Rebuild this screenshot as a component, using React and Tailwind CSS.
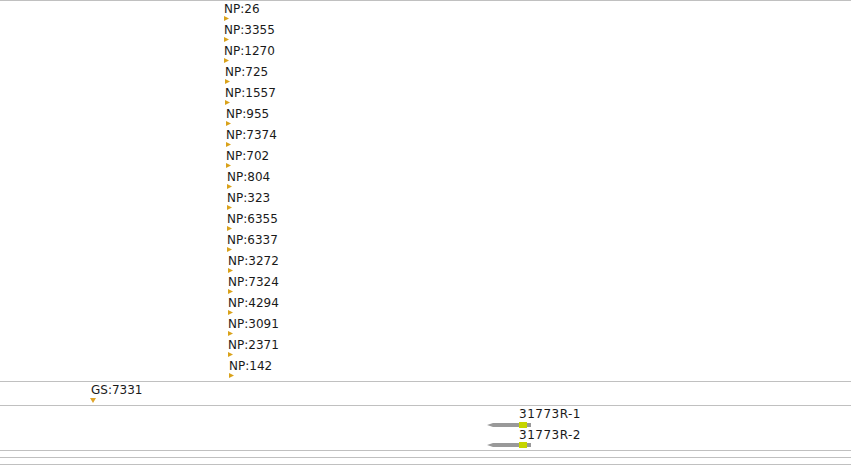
import React from 'react';

const npRows = [
  ['NP:26', 'ml-[224px]'],
  ['NP:3355', 'ml-[224px]'],
  ['NP:1270', 'ml-[224px]'],
  ['NP:725', 'ml-[225px]'],
  ['NP:1557', 'ml-[225px]'],
  ['NP:955', 'ml-[226px]'],
  ['NP:7374', 'ml-[226px]'],
  ['NP:702', 'ml-[226px]'],
  ['NP:804', 'ml-[227px]'],
  ['NP:323', 'ml-[227px]'],
  ['NP:6355', 'ml-[227px]'],
  ['NP:6337', 'ml-[227px]'],
  ['NP:3272', 'ml-[228px]'],
  ['NP:7324', 'ml-[228px]'],
  ['NP:4294', 'ml-[228px]'],
  ['NP:3091', 'ml-[228px]'],
  ['NP:2371', 'ml-[228px]'],
  ['NP:142', 'ml-[229px]'],
];

function RightMark() {
  return (
    <svg width="5" height="5" viewBox="0 0 5 5" className="block">
      <polygon points="0,0 5,2.5 0,5" fill="#d9a21b" />
    </svg>
  );
}

function DownMark() {
  return (
    <svg width="6" height="5" viewBox="0 0 6 5" className="block">
      <polygon points="0,0 6,0 3,5" fill="#e0a52a" />
    </svg>
  );
}

function GeneBar() {
  return (
    <svg width="44" height="6" viewBox="0 0 44 6" className="block">
      <path d="M0 3 L6 1 L44 1 L44 5 L6 5 Z" fill="#999999" />
      <rect x="32" y="0" width="8" height="6" fill="#c6d400" />
    </svg>
  );
}

export default function App() {
  return (
    <div className="w-[851px] h-[465px] bg-white overflow-hidden text-[12px] leading-[14px] text-[#1a1a1a] font-['DejaVu_Sans','Liberation_Sans',sans-serif]">
      {/* NP track */}
      <div className="border-t border-[#c0c0c0] h-[381px] flex flex-col">
        {npRows.map(([label, ml]) => (
          <div key={label} className={`h-[21px] flex flex-col ${ml}`}>
            <span className="pt-[1px] whitespace-nowrap">{label}</span>
            <RightMark />
          </div>
        ))}
      </div>

      {/* GS track */}
      <div className="border-t border-[#c0c0c0] h-[24px] pt-[1px] flex flex-col">
        <span className="ml-[91px] whitespace-nowrap">GS:7331</span>
        <div className="ml-[90px] mt-[1px]">
          <DownMark />
        </div>
      </div>

      {/* gene track */}
      <div className="border-t border-[#c0c0c0] h-[45px] pt-[1px] flex flex-col">
        <span className="ml-[519px] whitespace-nowrap tracking-[0.5px]">31773R-1</span>
        <div className="ml-[487px] mt-[1px]">
          <GeneBar />
        </div>
        <span className="ml-[519px] whitespace-nowrap tracking-[0.5px]">31773R-2</span>
        <div className="ml-[487px]">
          <GeneBar />
        </div>
      </div>

      <div className="border-t border-[#c0c0c0] h-[7px]" />
      <div className="border-t border-[#c0c0c0] h-[7px]" />
      <div className="border-t border-[#c0c0c0] h-[1px]" />
    </div>
  );
}
